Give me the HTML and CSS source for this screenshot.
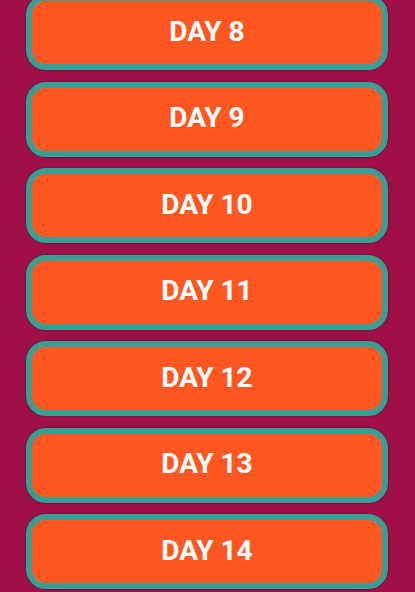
FILE: index.html
```html
<!DOCTYPE html>
<html lang="en">
<head>
    <meta charset="UTF-8">
    <meta name="viewport" content="width=device-width, initial-scale=1.0">
    <title>Days</title>
    <link rel="stylesheet" href="styles.css">
</head>
<body>
    <div class="day-list">
        <button class="day-button">DAY 8</button>
        <button class="day-button">DAY 9</button>
        <button class="day-button">DAY 10</button>
        <button class="day-button">DAY 11</button>
        <button class="day-button">DAY 12</button>
        <button class="day-button">DAY 13</button>
        <button class="day-button">DAY 14</button>
    </div>
</body>
</html>
```

FILE: styles.css
```css
body {
    margin: 0;
    height: 592px;
    overflow: hidden;
    background-color: #9e1047;
    font-family: Roboto, "Liberation Sans", sans-serif;
}
.day-list {
    display: flex;
    flex-direction: column;
    gap: 11.5px;
    padding: 0 27px 0 26px;
    margin-top: -5px;
}
.day-button {
    height: 75px;
    padding: 0 0 3px;
    border: 6px solid #3a9e94;
    border-radius: 20px;
    background-color: #ff5722;
    color: white;
    font-family: inherit;
    font-size: 28px;
    font-weight: bold;
    box-shadow: 0 0 2px rgba(0, 0, 0, 0.6);
    cursor: pointer;
}
```
